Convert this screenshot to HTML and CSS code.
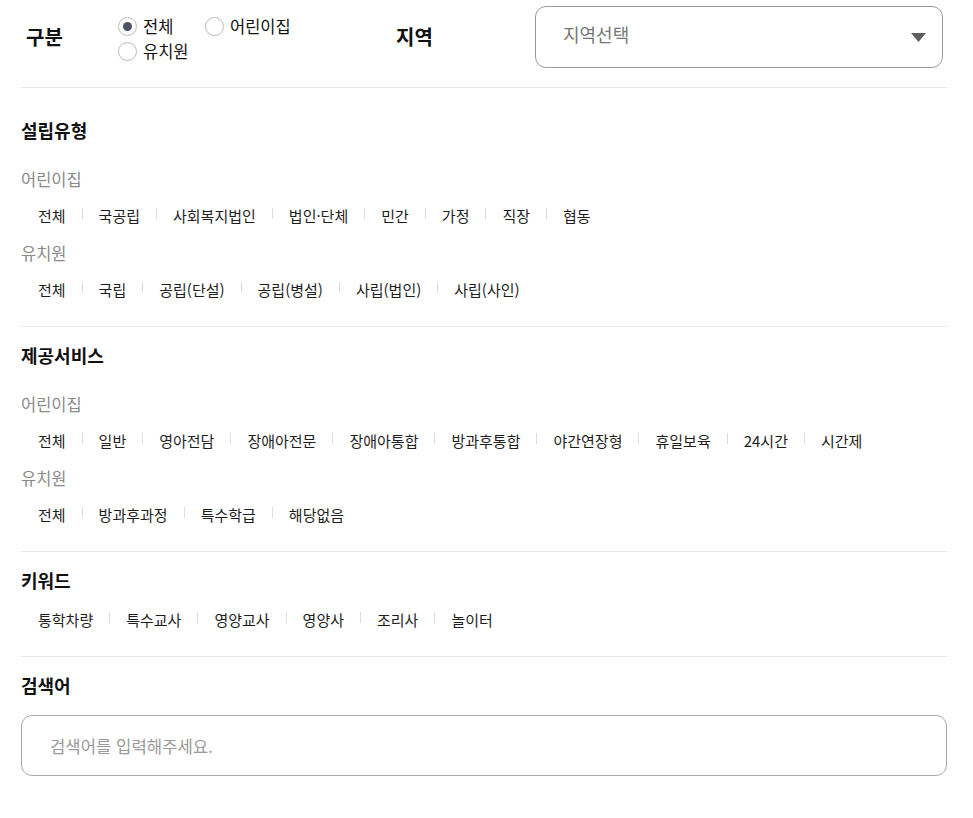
FILE: index.html
```html
<!DOCTYPE html>
<html lang="ko">
<head>
    <meta charset="UTF-8">
    <meta name="viewport" content="width=device-width, initial-scale=1.0">
    <title>어린이집 · 유치원 검색</title>
    <link rel="stylesheet" href="styles.css">
</head>
<body>

    <div class="search-filter">

        <div class="filter-head">
            <div class="head-label">구분</div>
            <div class="radio-group">
                <label class="radio"><input type="radio" name="kind" checked> 전체</label>
                <label class="radio"><input type="radio" name="kind"> 어린이집</label>
                <label class="radio"><input type="radio" name="kind"> 유치원</label>
            </div>
            <div class="head-label head-label-area">지역</div>
            <div class="select-box">
                <span class="select-text">지역선택</span>
                <svg class="select-arrow" width="15" height="9" viewBox="0 0 15 9">
                    <polygon points="0,0 15,0 7.5,9" fill="#5f5f5f"/>
                </svg>
            </div>
        </div>

        <div class="section section-first">
            <h2 class="section-title">설립유형</h2>
            <div class="group">
                <div class="group-label">어린이집</div>
                <ul class="tags">
                    <li>전체</li>
                    <li>국공립</li>
                    <li>사회복지법인</li>
                    <li>법인·단체</li>
                    <li>민간</li>
                    <li>가정</li>
                    <li>직장</li>
                    <li>협동</li>
                </ul>
            </div>
            <div class="group">
                <div class="group-label">유치원</div>
                <ul class="tags">
                    <li>전체</li>
                    <li>국립</li>
                    <li>공립(단설)</li>
                    <li>공립(병설)</li>
                    <li>사립(법인)</li>
                    <li>사립(사인)</li>
                </ul>
            </div>
        </div>

        <div class="section">
            <h2 class="section-title">제공서비스</h2>
            <div class="group">
                <div class="group-label">어린이집</div>
                <ul class="tags">
                    <li>전체</li>
                    <li>일반</li>
                    <li>영아전담</li>
                    <li>장애아전문</li>
                    <li>장애아통합</li>
                    <li>방과후통합</li>
                    <li>야간연장형</li>
                    <li>휴일보육</li>
                    <li>24시간</li>
                    <li>시간제</li>
                </ul>
            </div>
            <div class="group">
                <div class="group-label">유치원</div>
                <ul class="tags">
                    <li>전체</li>
                    <li>방과후과정</li>
                    <li>특수학급</li>
                    <li>해당없음</li>
                </ul>
            </div>
        </div>

        <div class="section">
            <h2 class="section-title">키워드</h2>
            <ul class="tags tags-keyword">
                <li>통학차량</li>
                <li>특수교사</li>
                <li>영양교사</li>
                <li>영양사</li>
                <li>조리사</li>
                <li>놀이터</li>
            </ul>
        </div>

        <div class="section">
            <h2 class="section-title">검색어</h2>
            <input class="search-input" type="text" placeholder="검색어를 입력해주세요.">
        </div>

    </div>

</body>
</html>
```

FILE: styles.css
```css
body {
    margin: 0;
    padding: 0;
    background-color: #fff;
    font-family: 'Noto Sans CJK KR', 'Noto Sans', sans-serif;
    color: #222;
}

.search-filter {
    width: 926px;
    margin-left: 21px;
}

/* top row */
.filter-head {
    display: flex;
    align-items: center;
    padding: 6px 0 19px 5px;
    border-bottom: 1px solid #e8e8e8;
}

.head-label {
    width: 92px;
    font-size: 20px;
    font-weight: 700;
    line-height: 26px;
    color: #111;
}

.head-label-area {
    width: 139px;
}

.radio-group {
    display: grid;
    grid-template-columns: 87px auto;
    width: 278px;
    padding-top: 3px;
}

.radio {
    display: flex;
    align-items: center;
    gap: 6px;
    font-size: 16.5px;
    line-height: 25px;
    color: #111;
    cursor: pointer;
}

.radio input {
    appearance: none;
    -webkit-appearance: none;
    box-sizing: border-box;
    width: 19px;
    height: 19px;
    margin: 0;
    border: 1px solid #bdbdbd;
    border-radius: 50%;
    background-color: #fff;
    display: flex;
    align-items: center;
    justify-content: center;
}

.radio input:checked::after {
    content: "";
    width: 9px;
    height: 9px;
    border-radius: 50%;
    background-color: #4d5264;
}

.select-box {
    flex: 1;
    box-sizing: border-box;
    height: 62px;
    margin-right: 4px;
    padding: 0 16px 6px 27px;
    border: 1px solid #9a9a9a;
    border-radius: 11px;
    display: flex;
    align-items: center;
    justify-content: space-between;
}

.select-text {
    font-size: 18px;
    line-height: 24px;
    color: #777;
}

.select-arrow {
    margin-top: 6px;
}

/* sections */
.section {
    padding: 16px 0 24px;
    border-bottom: 1px solid #e8e8e8;
}

.section-first {
    padding-top: 30px;
}

.section:last-child {
    border-bottom: none;
}

.section-title {
    margin: 0 0 25px;
    font-size: 18px;
    font-weight: 700;
    line-height: 24px;
    color: #111;
}

.group + .group {
    margin-top: 13px;
}

.group-label {
    margin-bottom: 13px;
    font-size: 16.5px;
    line-height: 24px;
    color: #8a8a8a;
}

.tags {
    display: flex;
    list-style: none;
    margin: 0;
    padding: 0 0 0 17px;
}

.tags li {
    display: flex;
    align-items: center;
    font-size: 15px;
    line-height: 24px;
    color: #1e1e1e;
    cursor: pointer;
}

.tags li + li::before {
    content: "";
    width: 1px;
    height: 11px;
    margin: 0 16px;
    background-color: #dcdcdc;
    transform: translateY(-3px);
}

.section-title + .tags-keyword {
    margin-top: -9px;
}

.section-title + .search-input {
    margin-top: -7px;
}

.search-input {
    display: block;
    box-sizing: border-box;
    width: 100%;
    height: 61px;
    padding: 0 28px;
    border: 1px solid #a9a9a9;
    border-radius: 11px;
    font-family: inherit;
    font-size: 16.7px;
    color: #222;
    outline: none;
}

.search-input::placeholder {
    color: #9a9a9a;
}
```
